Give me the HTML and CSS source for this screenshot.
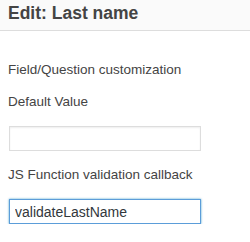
FILE: index.html
```html
<!DOCTYPE html>
<html>
<head>
  <link rel="stylesheet" href="styles.css">
</head>
<body>
  <div class="panel">
    <div class="panel-header">
      <h2 class="panel-title">Edit: Last name</h2>
    </div>
    <div class="panel-body">
      <div class="section-title">Field/Question customization</div>
      <div class="field">
        <label class="field-label" for="default-value">Default Value</label>
        <input class="field-input" id="default-value" type="text" value="">
      </div>
      <div class="field">
        <label class="field-label" for="js-callback">JS Function validation callback</label>
        <input class="field-input focused" id="js-callback" type="text" value="validateLastName">
      </div>
    </div>
  </div>
</body>
</html>
```

FILE: styles.css
```css
body {
  margin: 0;
  background-color: #fff;
  font-family: "Liberation Sans", Arial, sans-serif;
  color: #444;
}
.panel-header {
  height: 30px;
  padding: 0 8px;
  background-color: #fafafa;
  border-bottom: 1px solid #ddd;
}
.panel-title {
  margin: 0;
  font-size: 17.5px;
  font-weight: bold;
  line-height: 27px;
  color: #444;
}
.panel-body {
  padding: 29px 8px 0;
}
.section-title {
  font-size: 13.5px;
  line-height: 20px;
}
.field {
  margin-top: 12px;
}
.field + .field {
  margin-top: 14px;
}
.field-label {
  display: block;
  font-size: 13.5px;
  line-height: 20px;
  margin-bottom: 14px;
}
.field-input {
  display: block;
  box-sizing: border-box;
  width: 192px;
  height: 25px;
  margin: 0 0 0 1px;
  padding: 0 5px;
  border: 1px solid #ddd;
  border-radius: 0;
  box-shadow: inset 0 1px 2px rgba(0, 0, 0, 0.07);
  font-family: "Liberation Sans", Arial, sans-serif;
  font-size: 14px;
  color: #32373c;
  background-color: #fff;
  outline: none;
}
.field-input.focused {
  border-color: #5b9dd9;
  box-shadow: 0 0 2px rgba(30, 140, 190, 0.8);
}
```
